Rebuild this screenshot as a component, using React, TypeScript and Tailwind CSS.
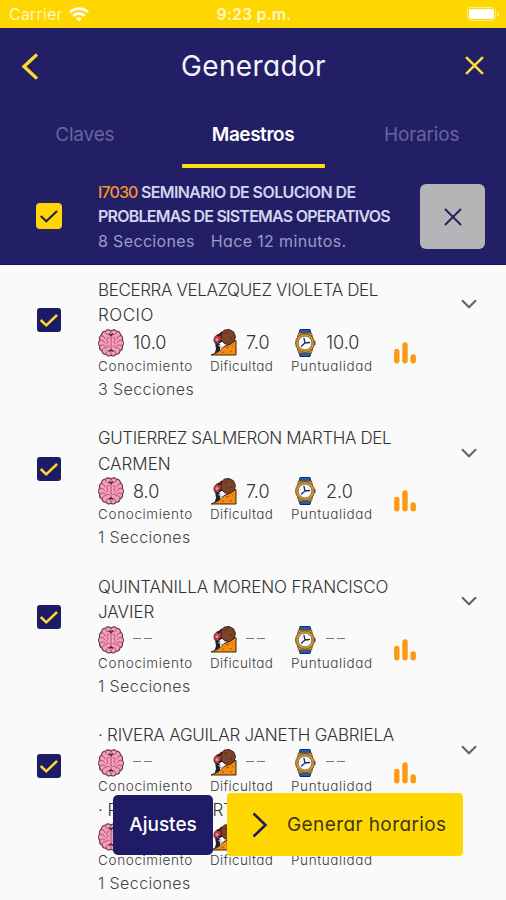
type Scores = [string, string, string];

type Teacher = {
  names: { lines: { text: string; className: string }[]; scores: Scores }[];
  sections: number;
};

const teachers: Teacher[] = [
  {
    names: [
      {
        lines: [
          { text: "BECERRA VELAZQUEZ VIOLETA DEL", className: "tracking-[-0.38px]" },
          { text: "ROCIO", className: "tracking-[0.5px]" },
        ],
        scores: ["10.0", "7.0", "10.0"],
      },
    ],
    sections: 3,
  },
  {
    names: [
      {
        lines: [
          { text: "GUTIERREZ SALMERON MARTHA DEL", className: "tracking-[-0.42px]" },
          { text: "CARMEN", className: "tracking-normal" },
        ],
        scores: ["8.0", "7.0", "2.0"],
      },
    ],
    sections: 1,
  },
  {
    names: [
      {
        lines: [
          { text: "QUINTANILLA MORENO FRANCISCO", className: "tracking-[-0.14px]" },
          { text: "JAVIER", className: "tracking-normal" },
        ],
        scores: ["--", "--", "--"],
      },
    ],
    sections: 1,
  },
  {
    names: [
      {
        lines: [{ text: "· RIVERA AGUILAR JANETH GABRIELA", className: "tracking-[-0.24px]" }],
        scores: ["--", "--", "--"],
      },
      {
        lines: [{ text: "· RAMIREZ MARTINEZ", className: "tracking-normal" }],
        scores: ["--", "--", "--"],
      },
    ],
    sections: 1,
  },
];

const BrainIcon = () => (
  <svg viewBox="0 0 26 28" className="w-[26px] h-[28px] shrink-0">
    <path
      d="M13 2.2C11.5.3 8.6.6 7.4 2.3 5 2.1 3.4 4 3.6 6 1.6 7 1 9.4 1.8 11 .2 12.800.2 15.600 1.600 17.200 1.300 19.500 2.300 21.300 4 22 4.400 24.300 6.200 25.500 8 25.200 9.500 27.400 11.900 27.500 13 26 14.100 27.500 16.500 27.400 18 25.200 19.800 25.500 21.600 24.300 22 22 23.700 21.300 24.700 19.500 24.400 17.200 25.800 15.600 25.800 12.800 24.200 11 25 9.400 24.400 7 22.400 6 22.600 4 21 2.100 18.600 2.300 17.400.600 14.500.300 13 2.200Z"
      fill="#f79db8"
      stroke="#5c3340"
      strokeWidth="1.1"
    />
    <g fill="none" stroke="#9a5068" strokeWidth="0.9" strokeLinecap="round">
      <path d="M13 3v22" />
      <path d="M7.500 3c0 2 1 2.500 3 2.800M3.800 7c2 .2 3 .8 3.200 2.700M2 11.500c2.500-.4 4 .3 4.500 2M2 17c1.500-1.500 3.500-1.500 5-.2M4.200 21.500c0-2 1.500-3 3.500-2.700M8.300 24.800c-.3-1.800.5-3 2.300-3.300M10.800 8.500C9 8.500 8.500 10 9.300 11.500s.2 3-1 3.500M11 17.500c-1.500-.8-2.500-.3-3 1" />
      <path d="M18.500 3c0 2-1 2.500-3 2.800M22.200 7c-2 .2-3 .8-3.200 2.700M24 11.500c-2.500-.4-4 .3-4.500 2M24 17c-1.500-1.500-3.500-1.500-5-.2M21.800 21.500c0-2-1.500-3-3.500-2.700M17.700 24.800c.3-1.800-.5-3-2.300-3.300M15.200 8.500c1.800 0 2.300 1.500 1.500 3s-.2 3 1 3.500M15 17.500c1.500-.8 2.500-.3 3 1" />
    </g>
    <path d="M10.800 4.500 13 6.500l2.200-2M10.800 22.500l2.200-1.600 2.200 1.600" fill="none" stroke="#4a2530" strokeWidth="1.300" />
  </svg>
);

const ClimbIcon = () => (
  <svg viewBox="0 0 27 27" className="w-[27px] h-[27px] shrink-0">
    <path d="M1 26 7 23.500l4-3 3-3 4-1.500 3-3 5-1.500V26Z" fill="#f28c13" stroke="#43230e" strokeWidth="1" />
    <path d="m16 19 3-1M20 23l2-.5M12 23.500l2-.5M22 17l1 .5" stroke="#a4510b" strokeWidth="1" />
    <path d="m5 13 4 1 2.500 4.500-2.500 4-4.500 2 1.500-4.500Z" fill="#1d2230" />
    <path d="m8.500 16.500 2.500 1-.5 3" fill="none" stroke="#e8f0f8" strokeWidth="1.200" />
    <path d="M4.500 13.500C3 9.500 5 6.500 8 5.500l4 1.500-1 4-3 4Z" fill="#d6323a" stroke="#3d1a1c" strokeWidth="0.800" />
    <path d="M8 7 12.500 3M9 13.500l4.500-2.500" stroke="#2b1714" strokeWidth="1.800" />
    <circle cx="7" cy="10.500" r="1.500" fill="#87b5dd" />
    <path d="m14 1.200 5-.7 4.500 2.300 2 4.700-1.500 5-4.500 3.200-5-1-3.500-4 .3-5.500Z" fill="#7b432a" stroke="#38201a" strokeWidth="1" />
    <path d="m15 5 2-1.500M20 10l2-1.500" stroke="#5c2e1c" strokeWidth="1.200" />
  </svg>
);

const WatchIcon = () => (
  <svg viewBox="0 0 22 28" className="w-[22px] h-[28px] shrink-0">
    <path d="M6 .5h10l1.500 6.500h-13ZM6 27.500h10L17.500 21h-13Z" fill="#245cb5" stroke="#152b59" strokeWidth="1" />
    <path d="M4.500 4h13l1 4h-15ZM4.500 24h13l1-4h-15Z" fill="#dfa63c" stroke="#6b4a1a" strokeWidth="0.800" />
    <path d="M20 12h1.500v4H20Z" fill="#6b4a1a" />
    <circle cx="11" cy="14" r="9.400" fill="#d69a30" stroke="#6b4a1a" strokeWidth="1" />
    <circle cx="11" cy="14" r="6.900" fill="#f7fbff" stroke="#705329" strokeWidth="0.800" />
    <path d="M10 9.500 11 14l4.500-.5M11 14l-3.500 3" fill="none" stroke="#1b2c57" strokeWidth="1.300" strokeLinecap="round" />
  </svg>
);

const ChartIcon = () => (
  <svg viewBox="0 0 22 22" className="w-[22px] h-[22px]" fill="none" stroke="#fb9a12" strokeWidth="5.400" strokeLinecap="round">
    <path d="M2.800 9.500v9.200M11 3v15.700M19.200 15v3.700" />
  </svg>
);

const CheckIcon = ({ className }: { className: string }) => (
  <svg viewBox="0 0 24 24" className={className} fill="none">
    <path d="m3 12 6 5.800L20.800 6.500" />
  </svg>
);

const CloseIcon = ({ className }: { className: string }) => (
  <svg viewBox="0 0 18 18" className={className} fill="none">
    <path d="m1 1 16 16M17 1 1 17" />
  </svg>
);

const StatusBar = () => (
  <div className="h-7 bg-[#ffd700] flex items-center justify-between pl-[9px] pr-[7px] text-[16px] text-[#fff6c0]">
    <div className="flex items-center gap-[6px] w-[150px]">
      <span className="tracking-[0.2px]">Carrier</span>
      <svg viewBox="0 0 20 15" className="w-5 h-[15px]" fill="none" stroke="#fffdf0" strokeWidth="2.800">
        <path d="M1 5.300C6 .4 14 .4 19 5.300M4.300 8.800c3.200-3.100 8.200-3.100 11.400 0" />
        <path d="m10 14.500-3-3c1.700-1.600 4.300-1.600 6 0Z" fill="#fffdf0" stroke="none" />
      </svg>
    </div>
    <span className="font-semibold tracking-[0.1px]">9:23 p.m.</span>
    <div className="flex justify-end items-center w-[150px]">
      <div className="w-[29px] h-[14px] rounded-[4px] border border-[#ffeb80] p-px">
        <div className="h-full rounded-[2px] bg-white" />
      </div>
      <div className="ml-px h-[5px] w-[2px] rounded-r bg-[#ffeb80]" />
    </div>
  </div>
);

type StatProps = {
  icon: React.ReactNode;
  value: string;
  label: string;
  className: string;
  labelClassName: string;
};

const Stat = ({ icon, value, label, className, labelClassName }: StatProps) => (
  <div className={className}>
    <div className="flex h-[28px] items-center">
      {icon}
      {value === "--" ? (
        <span className="ml-[9px] flex gap-[3px] pb-[2px]">
          <i className="h-[1.500px] w-2 bg-[#777]" />
          <i className="h-[1.500px] w-2 bg-[#777]" />
        </span>
      ) : (
        <span className="ml-[9px] text-[18px] text-[#333]">{value}</span>
      )}
    </div>
    <div className={`h-[21px] leading-[19px] text-[13.5px] text-[#3c3c3c] whitespace-nowrap ${labelClassName}`}>{label}</div>
  </div>
);

const TeacherRow = ({ teacher }: { teacher: Teacher }) => (
  <div className="flex h-[148.5px] shrink-0 font-light">
    <div className="w-[98px] pl-[37px] pt-[30.5px]">
      <div className="flex size-[24px] items-center justify-center rounded-[3px] bg-[#1c1b66]">
        <CheckIcon className="size-[22px] stroke-[#ffd72e] stroke-[2.8]" />
      </div>
    </div>
    <div className="w-[350px]">
      {teacher.names.map((name, i) => (
        <div key={i}>
          {name.lines.map((line) => (
            <p key={line.text} className={`h-[25.5px] leading-[25.5px] text-[17px] text-[#333] whitespace-nowrap ${line.className}`}>
              {line.text}
            </p>
          ))}
          <div className="flex h-[49px]">
            <Stat
              className="w-[112px]"
              labelClassName="tracking-[0.65px]"
              icon={<BrainIcon />}
              value={name.scores[0]}
              label="Conocimiento"
            />
            <Stat
              className="w-[81px]"
              labelClassName="tracking-[0.35px]"
              icon={<ClimbIcon />}
              value={name.scores[1]}
              label="Dificultad"
            />
            <Stat
              className="w-[103px]"
              labelClassName="tracking-[0.6px]"
              icon={<div className="pl-[3px] pr-px"><WatchIcon /></div>}
              value={name.scores[2]}
              label="Puntualidad"
            />
            {i === 0 && (
              <div className="pt-[13px]">
                <ChartIcon />
              </div>
            )}
          </div>
        </div>
      ))}
      <p className="h-[22px] leading-[22px] text-[16px] text-[#444] tracking-[0.4px]">{teacher.sections} Secciones</p>
    </div>
    <div className="pl-[13px] pt-[21.5px]">
      <svg viewBox="0 0 16 10" className="w-4 h-[10px]" fill="none" stroke="#666" strokeWidth="2.200">
        <path d="m1 1.200 7 7 7-7" />
      </svg>
    </div>
  </div>
);

const Header = () => (
  <header className="h-[237px] bg-[#221f66] border-b border-[#15135a]">
    <div className="flex h-[75px] items-center justify-between pl-[22px] pr-[22px]">
      <svg viewBox="0 0 16 27" className="w-4 h-[27px] mt-px" fill="none" stroke="#ffd92e" strokeWidth="3.300">
        <path d="M15 1.500 2 13.500l13 12" />
      </svg>
      <h1 className="text-[28px] text-[#f4f4fa] tracking-[0.35px] [font-feature-settings:'cv11'] pl-1">Generador</h1>
      <CloseIcon className="size-[19px] stroke-[#ffdc3c] stroke-[2.4]" />
    </div>
    <nav className="grid h-[65px] grid-cols-3 text-center text-[19px] leading-[63px] text-[#67659a]">
      <span className="tracking-[-0.2px] pl-px">Claves</span>
      <span className="relative font-semibold tracking-[-0.45px] text-white">
        Maestros
        <i className="absolute bottom-0 left-[13px] h-[4px] w-[143px] rounded-[1px] bg-[#ffdc14]" />
      </span>
      <span className="tracking-[-0.2px]">Horarios</span>
    </nav>
    <div className="flex pt-3 text-[16px] [font-feature-settings:'cv11']">
      <div className="w-[98px] pl-[36px] pt-[23px]">
        <div className="flex size-[26px] items-center justify-center rounded-[4px] bg-[#ffd700]">
          <CheckIcon className="size-[22px] stroke-[#24215f] stroke-[2.4]" />
        </div>
      </div>
      <div className="w-[322px] whitespace-nowrap font-semibold leading-[24.3px] text-[#d5d4ee]">
        <p className="tracking-[-0.6px]">
          <span className="font-medium tracking-[-0.9px] text-[#f5962f]">I7030</span> SEMINARIO DE SOLUCION DE
        </p>
        <p className="tracking-[-0.76px]">PROBLEMAS DE SISTEMAS OPERATIVOS</p>
        <p className="font-normal text-[#9c9bc4]">
          <span className="tracking-[0.35px]">8 Secciones</span>
          <span className="ml-4 tracking-[0.35px]">Hace 12 minutos.</span>
        </p>
      </div>
      <div className="mt-[4px] flex size-[65px] items-center justify-center rounded-[6px] bg-[#b5b5b8]">
        <CloseIcon className="size-[18px] stroke-[#25225f] stroke-2" />
      </div>
    </div>
  </header>
);

export default function App() {
  return (
    <main className="relative flex h-[900px] w-[506px] flex-col overflow-hidden bg-[#fafafa] font-[Inter,sans-serif]">
      <StatusBar />
      <Header />
      <section className="flex flex-col pt-[12.5px] [font-feature-settings:'cv11']">
        {teachers.map((teacher, i) => (
          <TeacherRow key={i} teacher={teacher} />
        ))}
      </section>

      {/* Floating actions */}
      <div className="absolute left-[113px] top-[793px] flex items-center gap-[14px] [font-feature-settings:'cv11']">
        <button className="h-[60px] w-[100px] rounded-[5px] bg-[#1f1b66] pt-[2px] text-[19px] font-medium text-white">Ajustes</button>
        <button className="flex h-[63px] w-[236px] items-center rounded-[4px] bg-[#ffd700] pl-[25px]">
          <svg viewBox="0 0 16 26" className="w-4 h-[26px]" fill="none" stroke="#1f1b5e" strokeWidth="2.500">
            <path d="m1.500 1.500 12 11.500-12 11.500" />
          </svg>
          <span className="ml-[19px] pt-[2px] text-[19px] tracking-[0.4px] text-[#3c361a]">Generar horarios</span>
        </button>
      </div>
    </main>
  );
}
